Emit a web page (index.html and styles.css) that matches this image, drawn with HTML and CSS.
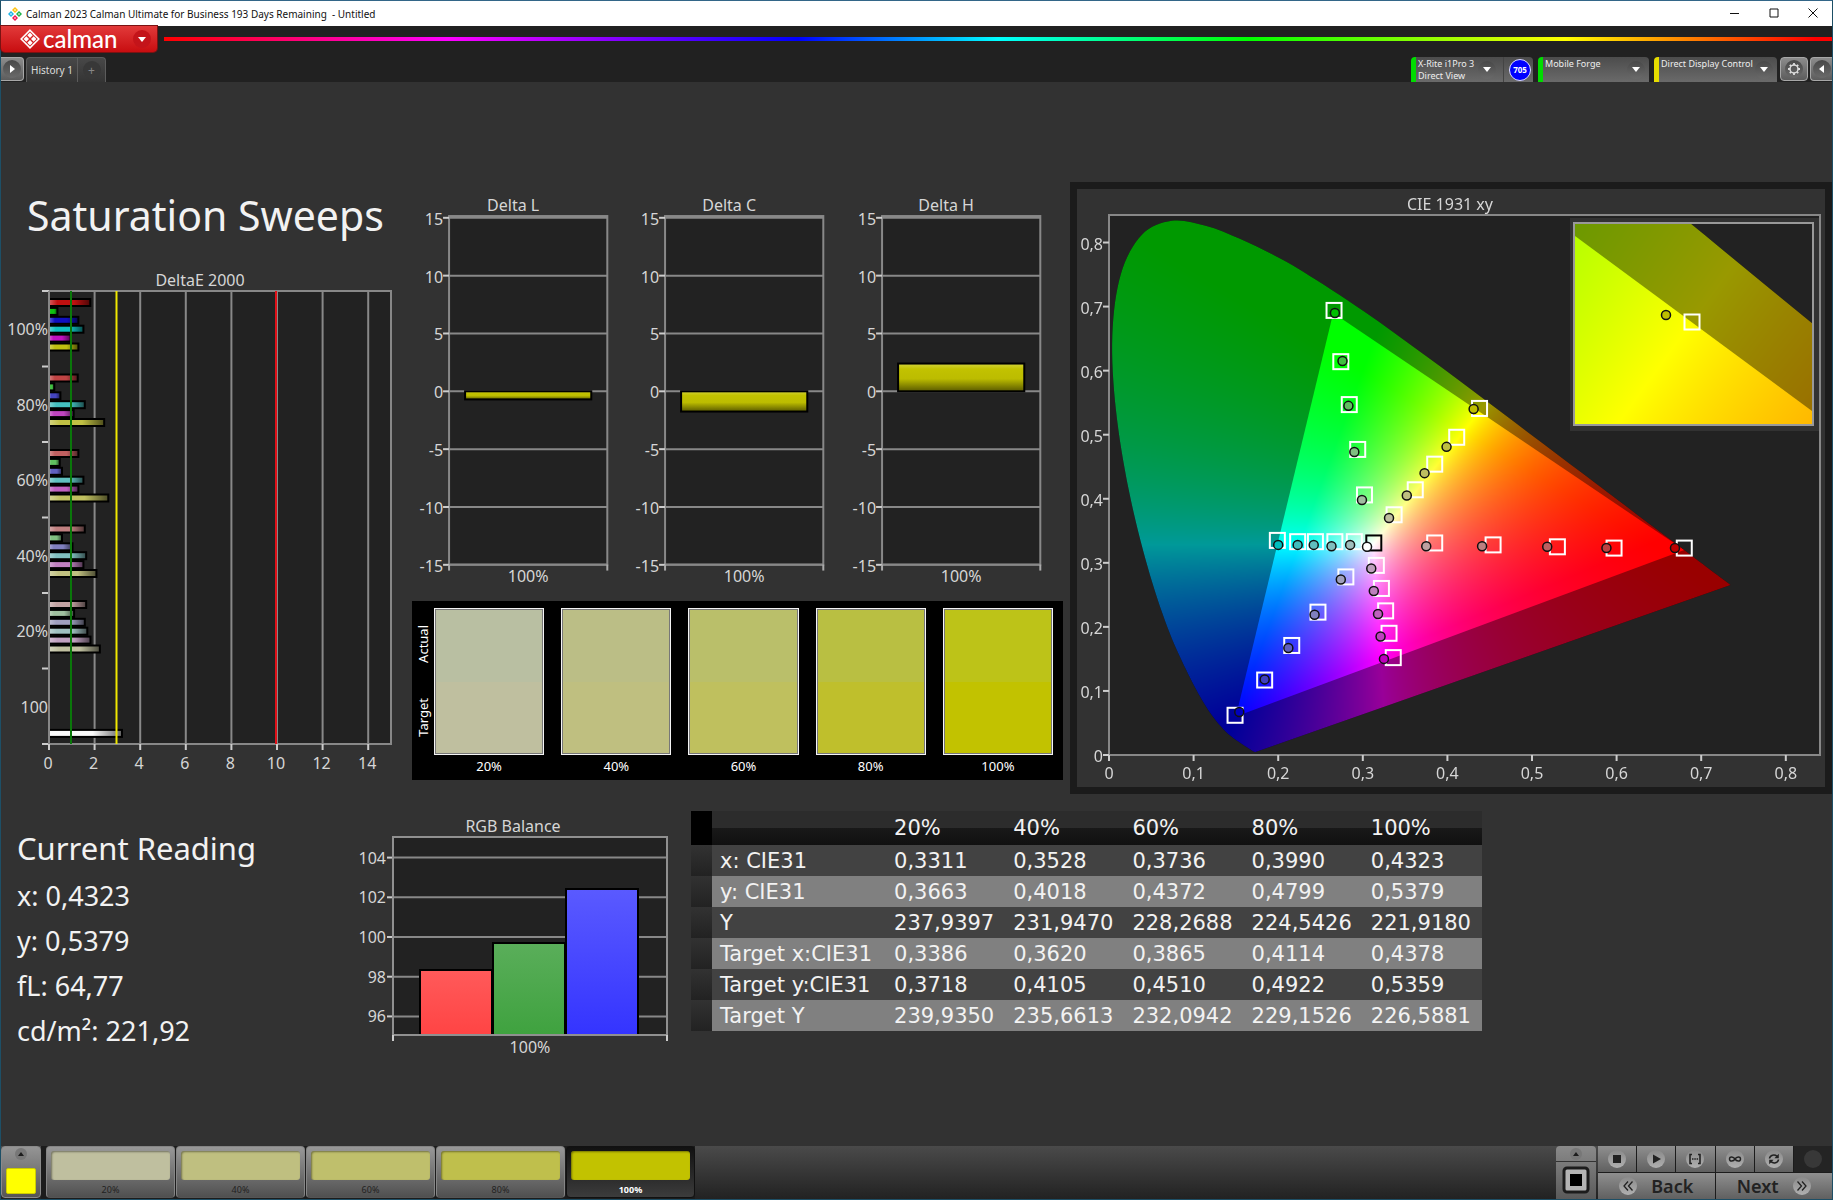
FILE: index.html
```html
<!DOCTYPE html>
<html lang="en">
<head>
<meta charset="utf-8">
<title>Calman 2023 - Untitled</title>
<link rel="stylesheet" href="styles.css">
</head>
<body>
<div class="window">
  <header class="titlebar">
    <svg class="app-icon" viewBox="0 0 14 14" aria-hidden="true">
      <path fill="#ffc20e" d="M7 0l3 3-3 3-3-3z"/><path fill="#21b24b" d="M11 4l3 3-3 3-3-3z"/>
      <path fill="#ed1651" d="M7 8l3 3-3 3-3-3z"/><path fill="#1fb5e8" d="M3 4l3 3-3 3-3-3z"/>
      <path fill="#fff" d="M7 2l1 1-1 1-1-1zM11 6l1 1-1 1-1-1zM7 10l1 1-1 1-1-1zM3 6l1 1-1 1-1-1z"/>
    </svg>
    <span class="titlebar-text">Calman 2023 Calman Ultimate for Business 193 Days Remaining &nbsp;- Untitled</span>
    <div class="window-buttons">
      <button type="button" aria-label="Minimize"><svg viewBox="0 0 10 10"><path d="M0 5.500h9"/></svg></button>
      <button type="button" aria-label="Maximize"><svg viewBox="0 0 10 10"><path d="M1 1h8v8H1z"/></svg></button>
      <button type="button" aria-label="Close"><svg viewBox="0 0 10 10"><path d="M.5.5l9 9M9.500.5l-9 9"/></svg></button>
    </div>
  </header>

  <div class="brandbar">
    <button type="button" class="brand">
      <svg class="brand-icon" viewBox="0 0 20 20" aria-hidden="true">
        <path fill="none" stroke="#fff" stroke-width="1.600" d="M10 1.200L18.800 10 10 18.800 1.200 10z"/>
        <path fill="#fff" d="M10 3.600l2.700 2.700L10 9 7.300 6.300zM13.700 7.300l2.700 2.700-2.700 2.700L11 10zM10 11l2.700 2.700-2.700 2.700-2.700-2.700zM6.300 7.300L9 10l-2.700 2.700L3.600 10z"/>
      </svg>
      <span class="brand-name">calman</span>
      <span class="dot dot-red"><i class="down"></i></span>
    </button>
    <div class="rainbow"></div>
  </div>

  <nav class="tabbar">
    <button type="button" class="square-btn edge-left" aria-label="Expand"><span class="dot"><i class="right"></i></span></button>
    <div class="tabs">
      <button type="button" class="tab">History 1</button>
      <button type="button" class="tab tab-add" aria-label="Add tab"><span class="dot dot-dark">+</span></button>
    </div>
    <div class="devices">
      <div class="device device-meter">
        <button type="button" class="device-btn"><span>X-Rite i1Pro 3<br>Direct View</span><span class="dot"><i class="down"></i></span></button>
        <button type="button" class="meter-badge">705</button>
      </div>
      <div class="device device-source">
        <button type="button" class="device-btn"><span>Mobile Forge</span><span class="dot"><i class="down"></i></span></button>
      </div>
      <div class="device device-display">
        <button type="button" class="device-btn"><span>Direct Display Control</span><span class="dot"><i class="down"></i></span></button>
      </div>
      <button type="button" class="square-btn gear" aria-label="Settings"><span class="dot">
        <svg viewBox="0 0 14 14"><circle cx="7" cy="7" r="4" fill="none" stroke="#ddd" stroke-width="1.500"/><path stroke="#ddd" stroke-width="1.800" d="M7 1v2M7 11v2M1 7h2M11 7h2M2.800 2.800l1.300 1.300M9.900 9.900l1.300 1.300M2.800 11.200l1.300-1.300M9.900 4.100l1.300-1.300"/></svg>
      </span></button>
      <button type="button" class="square-btn edge-right" aria-label="Collapse"><span class="dot"><i class="left"></i></span></button>
    </div>
  </nav>

  <main>
    <section class="row row-top">
      <div class="col-sweeps">
        <h1>Saturation Sweeps</h1>
        <svg id="delta-e" class="chart" viewBox="1 262 400 532" role="img" aria-label="DeltaE 2000"></svg>
      </div>
      <div class="col-deltas">
        <div class="deltas">
          <svg id="delta-l" class="chart" viewBox="0 182 216 408" role="img" aria-label="Delta L"></svg>
          <svg id="delta-c" class="chart" viewBox="0 182 216 408" role="img" aria-label="Delta C"></svg>
          <svg id="delta-h" class="chart" viewBox="0 182 216 408" role="img" aria-label="Delta H"></svg>
        </div>
        <div class="compare">
          <div class="compare-axis"><span>Actual</span><span>Target</span></div>
          <figure class="patch p20"><div></div><figcaption>20%</figcaption></figure>
          <figure class="patch p40"><div></div><figcaption>40%</figcaption></figure>
          <figure class="patch p60"><div></div><figcaption>60%</figcaption></figure>
          <figure class="patch p80"><div></div><figcaption>80%</figcaption></figure>
          <figure class="patch p100"><div></div><figcaption>100%</figcaption></figure>
        </div>
      </div>
      <div class="cie">
        <canvas id="cie-canvas" width="748" height="598"></canvas>
        <svg id="cie" class="chart" viewBox="1077 189 748 598" role="img" aria-label="CIE 1931 xy"></svg>
      </div>
    </section>

    <section class="row row-bottom">
      <div class="reading">
        <h2>Current Reading</h2>
        <p>x: 0,4323</p>
        <p>y: 0,5379</p>
        <p>fL: 64,77</p>
        <p>cd/m²: 221,92</p>
      </div>
      <svg id="rgb" class="chart" viewBox="373 810 318 250" role="img" aria-label="RGB Balance"></svg>
      <table>
        <colgroup><col class="c-mark"><col class="c-name"><col><col><col><col><col></colgroup>
        <thead><tr><td></td><td></td><th>20%</th><th>40%</th><th>60%</th><th>80%</th><th>100%</th></tr></thead>
        <tbody>
          <tr><td></td><th>x: CIE31</th><td>0,3311</td><td>0,3528</td><td>0,3736</td><td>0,3990</td><td>0,4323</td></tr>
          <tr><td></td><th>y: CIE31</th><td>0,3663</td><td>0,4018</td><td>0,4372</td><td>0,4799</td><td>0,5379</td></tr>
          <tr><td></td><th>Y</th><td>237,9397</td><td>231,9470</td><td>228,2688</td><td>224,5426</td><td>221,9180</td></tr>
          <tr><td></td><th>Target x:CIE31</th><td>0,3386</td><td>0,3620</td><td>0,3865</td><td>0,4114</td><td>0,4378</td></tr>
          <tr><td></td><th>Target y:CIE31</th><td>0,3718</td><td>0,4105</td><td>0,4510</td><td>0,4922</td><td>0,5359</td></tr>
          <tr><td></td><th>Target Y</th><td>239,9350</td><td>235,6613</td><td>232,0942</td><td>229,1526</td><td>226,5881</td></tr>
        </tbody>
      </table>
    </section>
  </main>

  <footer>
    <button type="button" class="current" aria-label="Current pattern"><span class="dot dot-small"><i class="up"></i></span><span class="current-color"></span></button>
    <div class="steps">
      <button type="button" class="step p20"><span></span>20%</button>
      <button type="button" class="step p40"><span></span>40%</button>
      <button type="button" class="step p60"><span></span>60%</button>
      <button type="button" class="step p80"><span></span>80%</button>
      <button type="button" class="step p100 active"><span></span>100%</button>
    </div>
    <div class="transport">
      <div class="stopper">
        <button type="button" aria-label="Show options"><span class="dot dot-small"><i class="up"></i></span></button>
        <button type="button" class="stopper-main" aria-label="Pattern window"><svg viewBox="0 0 28 28"><rect x="2" y="2" width="24" height="24" rx="3" fill="#b4b4b4" stroke="#1c1c1c" stroke-width="3"/><path d="M8 8h12v12H8z"/></svg></button>
      </div>
      <div class="controls">
        <div class="control-row">
          <button type="button" aria-label="Stop"><span class="dot dot-light"><svg viewBox="0 0 14 14"><path fill="#222" d="M3 3h8v8H3z"/></svg></span></button>
          <button type="button" aria-label="Play"><span class="dot dot-light"><svg viewBox="0 0 14 14"><path fill="#222" d="M4 2.500l8 4.500-8 4.500z"/></svg></span></button>
          <button type="button" aria-label="Read series"><span class="dot dot-light"><svg viewBox="0 0 14 14"><path fill="none" stroke="#222" stroke-width="1.600" d="M4 2.500H2v9h2M10 2.500h2v9h-2M4 7h1.500M6.300 7h1.500M8.600 7h1.500"/></svg></span></button>
          <button type="button" aria-label="Continuous"><span class="dot dot-light"><svg viewBox="0 0 14 14"><path fill="none" stroke="#222" stroke-width="1.500" d="M7 7C5.500 4.500 1.500 4 1.500 7S5.500 9.500 7 7s5.500-3 5.500 0S8.500 9.500 7 7z"/></svg></span></button>
          <button type="button" aria-label="Refresh"><span class="dot dot-light"><svg viewBox="0 0 14 14"><path fill="none" stroke="#222" stroke-width="1.600" d="M2.500 6.500C3 3 7.500 2 10 4.300M11.500 7.500C11 11 6.500 12 4 9.700"/><path fill="#222" d="M11.800 1.800v4.400H7.400zM2.200 12.200V7.800h4.400z"/></svg></span></button>
          <span class="control-empty"><span class="dot dot-dark"></span></span>
        </div>
        <div class="control-row">
          <button type="button" class="nav-btn"><span class="dot dot-light"><svg viewBox="0 0 14 14"><path fill="none" stroke="#222" stroke-width="1.300" d="M7 2.500L3 7l4 4.500M11.500 2.500L7.500 7l4 4.500"/></svg></span>Back</button>
          <button type="button" class="nav-btn">Next<span class="dot dot-light"><svg viewBox="0 0 14 14"><path fill="none" stroke="#222" stroke-width="1.300" d="M7 2.500L11 7l-4 4.500M2.500 2.500L6.500 7l-4 4.500"/></svg></span></button>
        </div>
      </div>
    </div>
  </footer>
</div>
<script src="charts.js"></script>
</body>
</html>
```
FILE: styles.css
```css
* { box-sizing: border-box; }

body {
  margin: 0;
  background: #323232;
  color: #f2f2f2;
  font-family: "Noto Sans", "Open Sans", sans-serif;
}

button {
  margin: 0;
  padding: 0;
  border: 0;
  background: none;
  color: inherit;
  font: inherit;
}

.window {
  display: flex;
  flex-direction: column;
  min-height: 100vh;
  border: 1px solid #1d4f66;
  border-top-color: #336688;
}

/* Title bar */
.titlebar {
  display: flex;
  align-items: center;
  height: 25px;
  padding-left: 7px;
  background: #fff;
  color: #111;
  font-size: 10px;
}
.app-icon { width: 14px; height: 14px; margin-right: 4px; }
.titlebar-text { flex: 1; white-space: nowrap; }
.window-buttons { display: flex; }
.window-buttons button { width: 39px; height: 25px; }
.window-buttons svg { width: 10px; height: 10px; fill: none; stroke: #111; stroke-width: 1; }

/* Brand bar */
.brandbar {
  display: flex;
  gap: 7px;
  height: 31px;
  background: #212121;
}
.brand {
  display: flex;
  align-items: center;
  width: 156px;
  height: 26px;
  padding: 0 6px 0 19px;
  border-radius: 0 0 4px 4px;
  background: linear-gradient(#e23a3a, #c80d10);
  box-shadow: 0 0 0 1px #7b1212;
  color: #fff;
}
.brand-icon { width: 20px; height: 20px; margin-right: 3px; }
.brand-name { flex: 1; font: 500 24px/22px "Lato", sans-serif; text-align: left; }
.rainbow {
  flex: 1;
  height: 4px;
  margin-top: 11px;
  background: linear-gradient(90deg, #f00, #f0f 17%, #00f 38%, #0ff 50%, #0f0 65%, #ff0 84%, #f00 99%);
}

/* Round button faces with arrow marks */
.dot {
  display: flex;
  align-items: center;
  justify-content: center;
  flex: none;
  width: 18px;
  height: 18px;
  border-radius: 50%;
  background: linear-gradient(#484848, #6a6a6a);
}
.dot svg { width: 14px; height: 14px; }
.dot-red { background: #c4141a; }
.dot-dark { background: #383838; color: #888; font-size: 12px; }
.dot-light { background: linear-gradient(#8a8a8a, #b0b0b0); }
.dot-small { width: 12px; height: 12px; background: #777; }
.down { border: 4px solid transparent; border-top: 5px solid #fff; border-bottom: 0; }
.up { border: 3px solid transparent; border-bottom: 4px solid #1c1c1c; border-top: 0; }
.right { border: 4px solid transparent; border-left: 5px solid #fff; border-right: 0; }
.left { border: 4px solid transparent; border-right: 5px solid #fff; border-left: 0; }

/* Tab bar */
.tabbar {
  display: flex;
  align-items: flex-start;
  height: 25px;
  background: #212121;
  font-size: 10px;
}
.square-btn {
  display: flex;
  align-items: center;
  justify-content: center;
  width: 28px;
  height: 24px;
  border: 1px solid #a8a8a8;
  border-radius: 4px;
  background: linear-gradient(#8c8c8c, #5c5c5c);
}
.edge-left { width: 23px; border-left: 0; border-radius: 0 4px 4px 0; }
.edge-right { width: 22px; border-right: 0; border-radius: 4px 0 0 4px; }
.tabs {
  display: flex;
  height: 25px;
  margin-left: 2px;
  border: 1px solid #5c5c5c;
  border-bottom: 0;
  border-radius: 4px 4px 0 0;
  background: linear-gradient(#484848, #343434);
}
.tab { width: 50px; color: #ddd; }
.tab-add { display: flex; align-items: center; justify-content: center; width: 28px; border-left: 1px solid #5c5c5c; }
.devices { display: flex; gap: 5px; margin-left: auto; }
.device {
  display: flex;
  align-items: center;
  height: 25px;
  border-left: 5px solid #0d0;
  border-radius: 4px 4px 0 0;
  background: linear-gradient(#4c4c4c, #6a6a6a);
}
.device-meter { width: 122px; }
.device-source { width: 111px; }
.device-display { width: 123px; border-left-color: #e6dc00; margin-right: -2px; }
.device-btn {
  display: flex;
  flex: 1;
  align-items: center;
  justify-content: space-between;
  height: 25px;
  padding: 0 4px 0 2px;
  color: #eee;
  font-size: 9px;
  line-height: 12px;
  text-align: left;
}
.device-btn span:first-child { align-self: flex-start; padding-top: 1px; white-space: nowrap; }
.device-meter .device-btn { border-right: 1px solid #444; padding-right: 7px; }
.meter-badge {
  width: 22px;
  height: 22px;
  margin: 0 2px 0 5px;
  border: 1px solid #ddf;
  border-radius: 50%;
  background: #00f;
  color: #fff;
  font-size: 8px;
  font-weight: 700;
}
.gear { margin-right: -3px; }

/* Work area */
main { flex: 1; padding: 100px 0 80px; }
.row { display: grid; align-items: start; }
.row-top { grid-template-columns: 400fr 669fr 762fr; }
.row-bottom { grid-template-columns: 372fr 318fr 791fr 350fr; margin-top: 17px; }
.chart { display: block; width: 100%; height: auto; overflow: visible; }
.chart text { font-size: 16px; fill: #d6d6d6; }

h1 {
  height: 80px;
  margin: 0;
  padding-left: 26px;
  font-size: 41px;
  font-weight: 400;
  line-height: 66px;
  white-space: nowrap;
}

.deltas { display: grid; grid-template-columns: repeat(3, 1fr); padding: 0 14px 0 6px; }
.compare {
  display: flex;
  gap: 17px;
  height: 179px;
  margin: 10px 7px 0 11px;
  padding: 7px 10px 0 0;
  background: #000;
  color: #fff;
}
.compare-axis {
  display: flex;
  flex-direction: column;
  justify-content: space-around;
  align-items: center;
  width: 22px;
  height: 147px;
  margin-right: -17px;
  font-size: 13px;
}
.compare-axis span { writing-mode: vertical-rl; transform: rotate(180deg); }
.patch { flex: 1; margin: 0; text-align: center; font-size: 13px; line-height: 22px; }
.patch div { height: 147px; border: 1px solid #f4f4f4; outline: 1px solid #777; outline-offset: -2px; }
.patch div { background: linear-gradient(var(--actual) 50%, var(--target) 50%); }
.p20 { --actual: #b9bfa2; --target: #bfbf9f; }
.p40 { --actual: #bbbe86; --target: #bfbf80; }
.p60 { --actual: #babf6a; --target: #bfc05e; }
.p80 { --actual: #b9bf42; --target: #bfbf2c; }
.p100 { --actual: #bdc318; --target: #c2c200; }

.cie { position: relative; border: 7px solid #1b1b1b; }
.cie canvas { display: block; width: 100%; height: auto; }
.cie svg { position: absolute; inset: 0; }

.reading { padding: 15px 0 0 16px; }
.reading h2 { margin: 0; font-size: 31px; font-weight: 400; line-height: 44px; }
.reading p { margin: 0; font-size: 27px; line-height: 45px; }
.reading h2 + p { margin-top: 3px; }

table {
  width: 100%;
  border-collapse: collapse;
  table-layout: fixed;
  font: 21px/30px "DejaVu Sans", sans-serif;
}
.c-mark { width: 21px; }
.c-name { width: 22%; }
th, td { height: 31px; padding: 0 0 0 8px; font-weight: 400; text-align: left; white-space: nowrap; }
thead tr { background: linear-gradient(#2c2c2c 50%, #191919 50%, #101010); }
thead th { height: 34px; }
tbody tr:nth-child(odd) { background: #424242; }
tbody tr:nth-child(even) { background: #808080; }
tr td:first-child { background: linear-gradient(#323232, #222); }
thead tr td:first-child { background: #000; }

/* Bottom bar */
footer {
  display: flex;
  height: 53px;
  background: linear-gradient(#4a4a4a, #222);
}
.current {
  display: flex;
  flex-direction: column;
  align-items: center;
  justify-content: space-between;
  width: 40px;
  height: 52px;
  padding: 1px 0 3px;
  border: 1px solid #8a8a8a;
  border-radius: 4px;
  background: linear-gradient(#959595, #555);
}
.current-color { width: 30px; height: 26px; border: 1px solid #cc0; border-radius: 2px; background: #ff0; }
.steps { display: flex; gap: 1px; padding-left: 5px; background: #1c1c1c; }
.step {
  display: flex;
  flex-direction: column;
  align-items: center;
  width: 129px;
  height: 52px;
  padding: 4px 4px 0;
  border: 1px solid #858585;
  border-bottom-color: #555;
  border-radius: 4px;
  background: linear-gradient(#989898, #505050);
  color: #222;
  font-size: 9px;
  line-height: 14px;
}
.step span { width: 119px; height: 31px; margin-bottom: 3px; border-radius: 3px; background: var(--target); box-shadow: inset 1px 1px 2px #0006; }
.step.p60 { --target: #bfbf6c; }
.step.p80 { --target: #bfbf4c; }
.step.active { border-color: #111; background: linear-gradient(#111, #3c3c3c); color: #fff; font-weight: 700; }

.transport { display: flex; gap: 2px; width: 276px; margin-left: auto; }
.stopper { width: 40px; background: linear-gradient(#8a8a8a, #5a5a5a); border-radius: 4px 4px 0 0; }
.stopper button { display: flex; align-items: center; justify-content: center; width: 40px; height: 15px; }
.stopper .stopper-main { height: 37px; border-top: 1px solid #333; }
.stopper svg { width: 28px; height: 28px; }
.controls { flex: 1; display: flex; flex-direction: column; gap: 1px; background: #1c1c1c; }
.control-row { display: flex; flex: 1; gap: 1px; }
.control-row > * {
  display: flex;
  flex: 1;
  align-items: center;
  justify-content: center;
  background: linear-gradient(#8f8f8f, #606060);
}
.control-row > .control-empty { background: #242424; }
.control-row .nav-btn { gap: 14px; color: #222; font-size: 18px; font-weight: 600; line-height: 24px; }
```
FILE: charts.js
```js
const NS = 'http://www.w3.org/2000/svg';

function add(parent, tag, attrs, text) {
  const el = document.createElementNS(NS, tag);
  for (const k in attrs) el.setAttribute(k, attrs[k]);
  if (text !== undefined) el.textContent = text;
  parent.appendChild(el);
  return el;
}
function line(svg, x1, y1, x2, y2, stroke = '#888', width = 2) {
  add(svg, 'line', { x1, y1, x2, y2, stroke, 'stroke-width': width });
}
function label(svg, x, y, text, anchor = 'middle') {
  add(svg, 'text', { x, y, 'text-anchor': anchor }, text);
}
function gradient(svg, id, stops, horizontal) {
  const g = add(svg, 'linearGradient', { id, x1: 0, y1: 0, x2: horizontal ? 1 : 0, y2: horizontal ? 0 : 1 });
  for (const [offset, color] of stops) add(g, 'stop', { offset, 'stop-color': color });
}

/* DeltaE 2000 */
(function () {
  const svg = document.getElementById('delta-e');
  const x0 = 49, unit = 22.8, right = 391, top = 291, bottom = 744, step = 75.5;
  gradient(svg, 'shade', [[0, '#ffffff55'], [0.2, '#ffffff00'], [0.6, '#00000000'], [1, '#00000099']], true);
  label(svg, 200, 286, 'DeltaE 2000');
  add(svg, 'rect', { x: x0, y: top, width: right - x0, height: bottom - top, fill: '#222', stroke: '#888', 'stroke-width': 2 });
  for (let v = 0; v <= 14; v += 2) {
    const x = x0 + v * unit;
    if (v) line(svg, x, top, x, bottom);
    line(svg, x, bottom, x, bottom + 6, '#ccc');
    label(svg, x - 1, 769, v);
  }
  const groups = [
    ['100%', [1.81, .37, 1.29, 1.51, .95, 1.29]],
    ['80%', [1.26, .23, .5, 1.57, 1.08, 2.42]],
    ['60%', [1.29, .47, .57, 1.51, 1.29, 2.6]],
    ['40%', [1.57, .57, 1.03, 1.63, 1.51, 2.08]],
    ['20%', [1.63, 1.1, 1.57, 1.68, 1.82, 2.23]],
    ['100', [0, 0, 0, 0, 0, 0, 3.2]]
  ];
  const masks = [[1, 0, 0], [0, 1, 0], [0, 0, 1], [0, 1, 1], [1, 0, 1], [1, 1, 0], [1.3, 1.3, 1.3]];
  const low = [16, 68, 96, 128, 160, 255];
  groups.forEach(([name, values], i) => {
    const y = top + i * step;
    line(svg, 42, y, x0, y, '#ccc');
    label(svg, 48, y + 44, name, 'end');
    values.forEach((v, j) => {
      if (!v) return;
      const rgb = masks[j].map(m => m ? Math.min(255, 192 * m) : low[i]);
      const box = { x: x0, y: y + 8 + j * 8.9, width: v * unit, height: 7 };
      add(svg, 'rect', { ...box, fill: `rgb(${rgb})` });
      add(svg, 'rect', { ...box, fill: 'url(#shade)', stroke: '#000', 'stroke-width': 2 });
    });
  });
  line(svg, 42, bottom, x0, bottom, '#ccc');
  line(svg, x0, top, x0, bottom);
  line(svg, 71, top, 71, bottom, '#0a780a');
  line(svg, 116.500, top, 116.500, bottom, '#f0e800');
  line(svg, 276, top, 276, bottom, '#e01018');
})();

/* Delta L, C and H */
[['delta-l', 'Delta L', -0.7], ['delta-c', 'Delta C', -1.75], ['delta-h', 'Delta H', 2.4]].forEach(([id, title, value]) => {
  const svg = document.getElementById(id);
  const left = 42, right = 200, zero = 391, unit = 11.55;
  gradient(svg, id + '-fill', [[0, '#d2d23c'], [.2, '#c2c200'], [.55, '#bcbc00'], [1, '#5a5a00']]);
  label(svg, 106, 211, title);
  add(svg, 'rect', { x: left, y: 216, width: right - left, height: 348, fill: '#222', stroke: '#888', 'stroke-width': 2 });
  for (let v = -15; v <= 15; v += 5) {
    const y = zero - v * unit;
    line(svg, left, y, right, y);
    line(svg, left - 6, y, left, y, '#ccc');
    label(svg, left - 6, y + 7, v, 'end');
  }
  line(svg, left, 564, left, 570, '#aaa');
  line(svg, right, 564, right, 570, '#aaa');
  label(svg, 121, 581, '100%');
  add(svg, 'rect', { x: 58, y: value > 0 ? zero - value * unit : zero, width: 126, height: Math.abs(value) * unit, fill: `url(#${id}-fill)`, stroke: '#000', 'stroke-width': 2 });
});

/* RGB balance */
(function () {
  const svg = document.getElementById('rgb');
  const left = 393, right = 667, top = 836, bottom = 1034;
  label(svg, 513, 831, 'RGB Balance');
  add(svg, 'rect', { x: left, y: top, width: right - left, height: bottom - top, fill: '#222' });
  for (let v = 96; v <= 104; v += 2) {
    const y = 936 - (v - 100) * 19.85;
    line(svg, left, y, right, y);
    line(svg, left - 6, y, left, y, '#ccc');
    label(svg, left - 7, y + 6, v, 'end');
  }
  const bars = [[420, 969, '#ff5a5a', '#ff4444'], [493, 942, '#5aae5a', '#3fa23f'], [566, 888, '#5a5aff', '#3434ff']];
  bars.forEach(([x, y, a, b], i) => {
    gradient(svg, 'rgb-' + i, [[0, a], [1, b]]);
    add(svg, 'rect', { x, y, width: 72, height: bottom - y, fill: `url(#rgb-${i})`, stroke: '#000', 'stroke-width': 2 });
  });
  add(svg, 'rect', { x: left, y: top, width: right - left, height: bottom - top, fill: 'none', stroke: '#909090', 'stroke-width': 2 });
  line(svg, left, bottom, left, bottom + 6, '#ccc');
  line(svg, right, bottom, right, bottom + 6, '#ccc');
  label(svg, 530, 1052, '100%');
})();

/* CIE 1931 xy */
(function () {
  const locus = [[.1741, .005], [.1733, .0048], [.1714, .0051], [.1689, .0069], [.1644, .0109], [.1566, .0177], [.151, .0227], [.144, .0297], [.1355, .0399],
    [.1241, .0578], [.1096, .0868], [.0913, .1327], [.0687, .2007], [.0454, .295], [.0235, .4127], [.0082, .5384], [.0039, .6548], [.0139, .7502],
    [.0389, .812], [.0743, .8338], [.1142, .8262], [.1547, .8059], [.1929, .7816], [.2296, .7543], [.3016, .6923], [.3731, .6245], [.4441, .5547],
    [.5125, .4866], [.5752, .4242], [.627, .3725], [.6658, .334], [.6915, .3083], [.719, .2809], [.7347, .2653]];
  const gamut = [[.68, .32], [.265, .69], [.15, .06]];

  const canvas = document.getElementById('cie-canvas');
  const ctx = canvas.getContext('2d');
  ctx.fillStyle = '#323232';
  ctx.fillRect(0, 0, 748, 598);

  function color(x, y) {
    const X = x / y, Z = (1 - x - y) / y;
    const lin = [3.2406 * X - 1.5372 - .4986 * Z, -.9689 * X + 1.8758 + .0415 * Z, .0557 * X - .204 + 1.057 * Z].map(c => Math.max(0, c));
    const max = Math.max(...lin);
    return lin.map(c => 255 * c / max);
  }
  function smoothPath(points, map) {
    const p = points.map(map), n = p.length;
    ctx.beginPath();
    ctx.moveTo(...p[0]);
    for (let i = 0; i < n - 1; i++) {
      const a = p[Math.max(0, i - 1)], b = p[i], c = p[i + 1], d = p[Math.min(n - 1, i + 2)];
      ctx.bezierCurveTo(b[0] + (c[0] - a[0]) / 6, b[1] + (c[1] - a[1]) / 6, c[0] - (d[0] - b[0]) / 6, c[1] - (d[1] - b[1]) / 6, c[0], c[1]);
    }
    ctx.closePath();
  }
  /* Paints the diagram into the box x, y, w, h with chromaticity (cx, cy) at its lower left corner */
  function paint(x, y, w, h, cx, cy, sx, sy) {
    const off = document.createElement('canvas');
    off.width = w; off.height = h;
    const o = off.getContext('2d'), img = o.createImageData(w, h);
    for (let j = 0; j < h; j++) for (let i = 0; i < w; i++) {
      const c = color(cx + (i + .5) / sx, cy + (h - j - .5) / sy), k = 4 * (j * w + i);
      img.data[k] = c[0]; img.data[k + 1] = c[1]; img.data[k + 2] = c[2]; img.data[k + 3] = 255;
    }
    o.putImageData(img, 0, 0);
    const map = ([a, b]) => [x + (a - cx) * sx, y + h - (b - cy) * sy];
    ctx.fillStyle = '#222';
    ctx.fillRect(x, y, w, h);
    ctx.save();
    ctx.beginPath(); ctx.rect(x, y, w, h); ctx.clip();
    smoothPath(locus, map);
    ctx.fillStyle = '#000';
    ctx.fill();
    ctx.clip();
    ctx.globalAlpha = .6;
    ctx.drawImage(off, x, y);
    ctx.beginPath();
    gamut.map(map).forEach(p => ctx.lineTo(...p));
    ctx.closePath();
    ctx.clip();
    ctx.globalAlpha = 1;
    ctx.drawImage(off, x, y);
    ctx.restore();
  }
  paint(32, 26, 711, 540, 0, 0, 846, 640.6);
  ctx.fillStyle = '#323232';
  ctx.fillRect(493, 29, 249, 213);
  paint(497, 34, 239, 202, .4129, .5096, 4720, 3910);

  const svg = document.getElementById('cie');
  label(svg, 1450, 210, 'CIE 1931 xy');
  add(svg, 'rect', { x: 1109, y: 215, width: 711, height: 540, fill: 'none', stroke: '#888', 'stroke-width': 2 });
  add(svg, 'rect', { x: 1574, y: 223, width: 239, height: 202, fill: 'none', stroke: '#999', 'stroke-width': 2 });
  for (let i = 0; i <= 8; i++) {
    const text = i ? '0,' + i : '0', x = 1109 + i * 84.6, y = 755 - i * 64.06;
    line(svg, x, 755, x, 761, '#ccc');
    line(svg, 1103, y, 1109, y, '#ccc');
    label(svg, x, 779, text);
    label(svg, 1103, y + 7, text, 'end');
  }
  const X = x => 1109 + x * 846, Y = y => 755 - y * 640.6;
  const square = (x, y, stroke = '#fff') => add(svg, 'rect', { x: x - 7.5, y: y - 7.5, width: 15, height: 15, fill: 'none', stroke, 'stroke-width': 2 });
  const circle = (x, y, fill) => add(svg, 'circle', { cx: x, cy: y, r: 4.5, fill, stroke: '#111', 'stroke-width': 1.5 });

  const targets = [
    [.385, .331], [.454, .328], [.53, .325], [.597, .323], [.68, .323],
    [.302, .406], [.294, .477], [.284, .547], [.274, .614], [.266, .694],
    [.28, .278], [.247, .223], [.216, .171], [.184, .117], [.149, .062],
    [.29, .333], [.267, .333], [.244, .333], [.223, .333], [.199, .335],
    [.316, .296], [.322, .26], [.327, .225], [.331, .19], [.336, .152],
    [.337, .375], [.362, .414], [.385, .454], [.411, .496], [.438, .541]];
  targets.forEach(([x, y]) => square(X(x), Y(y)));
  square(X(.313), Y(.331), '#000');

  const low = [160, 128, 96, 64, 0];
  const readings = [
    [[1, 0, 0], [.375, .326], [.441, .326], [.518, .325], [.588, .323], [.669, .323]],
    [[0, 1, 0], [.299, .398], [.29, .473], [.283, .545], [.276, .615], [.267, .69]],
    [[0, 0, 1], [.274, .274], [.243, .219], [.212, .167], [.184, .118], [.154, .067]],
    [[0, 1, 1], [.285, .328], [.263, .326], [.242, .328], [.223, .328], [.2, .328]],
    [[1, 0, 1], [.31, .291], [.313, .256], [.318, .22], [.321, .185], [.325, .15]],
    [[1, 1, 0], [.331, .37], [.352, .405], [.373, .44], [.399, .481], [.431, .54]]];
  readings.forEach(([mask, ...points]) => points.forEach(([x, y], i) =>
    circle(X(x), Y(y), `rgb(${mask.map(m => m ? 190 : low[i])})`)));
  circle(X(.305), Y(.325), '#fff');

  square(1692, 322);
  circle(1666, 315, '#bebe00');
})();
```
